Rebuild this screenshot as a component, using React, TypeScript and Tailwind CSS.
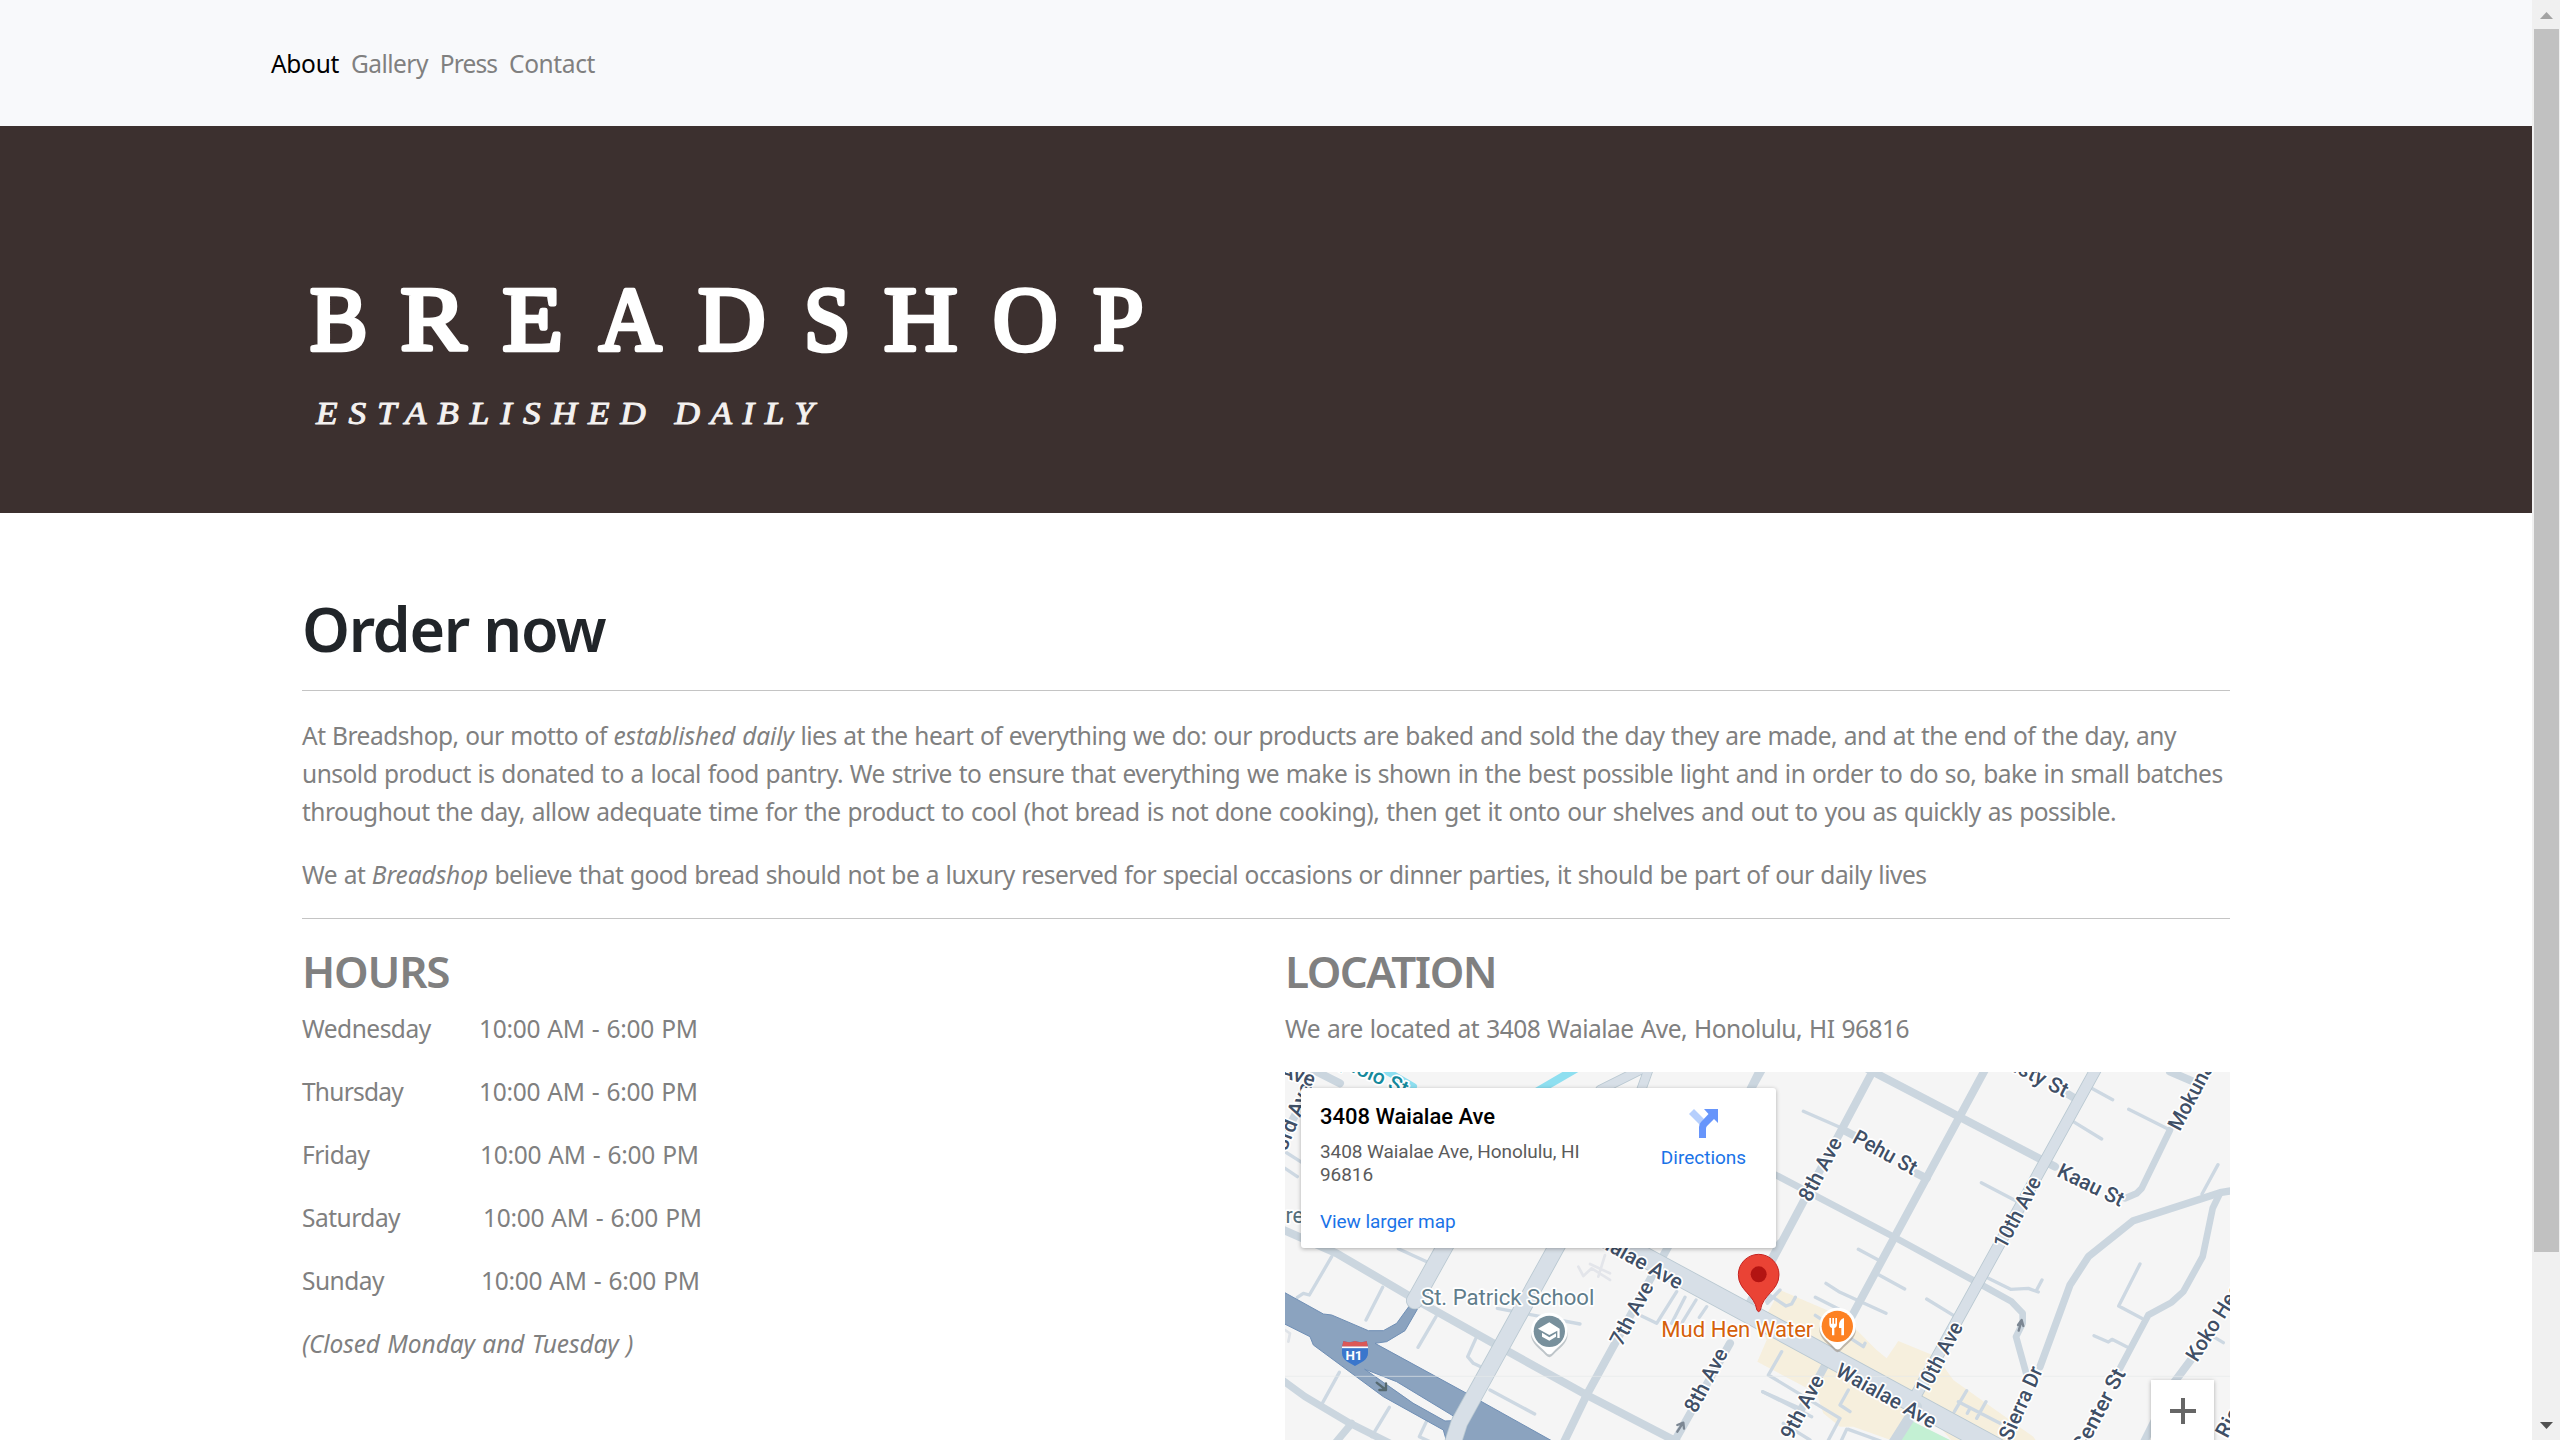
const navLinks = [
  { t: 'About', cls: 'text-black tracking-[-0.3px]' },
  { t: 'Gallery', cls: 'tracking-[-0.55px]' },
  { t: 'Press', cls: 'tracking-[-0.9px]' },
  { t: 'Contact', cls: 'tracking-[-0.4px]' },
];

const hours = [
  { day: 'Wednesday', pad: 'w-[177px]' },
  { day: 'Thursday', pad: 'w-[177px] tracking-[-0.75px]' },
  { day: 'Friday', pad: 'w-[178px]' },
  { day: 'Saturday', pad: 'w-[181px]' },
  { day: 'Sunday', pad: 'w-[179px]' },
];

const wordmark = [
  { c: 'B', x: 310, w: 57 },
  { c: 'R', x: 400.5, w: 65 },
  { c: 'E', x: 502.5, w: 60 },
  { c: 'A', x: 599, w: 62 },
  { c: 'D', x: 698, w: 67 },
  { c: 'S', x: 804, w: 46 },
  { c: 'H', x: 884, w: 73 },
  { c: 'O', x: 993, w: 64 },
  { c: 'P', x: 1093, w: 50 },
];

function Logo() {
  return (
    <svg className="block h-[387px] w-full" viewBox="0 126 2532 387">
      <g fill="#fff" stroke="#fff" strokeWidth="4.6" strokeLinejoin="round" fontFamily="'Liberation Serif', serif" fontSize="91">
        {wordmark.map((l, i) => (
          <text key={i} x={l.x} y="349.5" textLength={l.w} lengthAdjust="spacingAndGlyphs">{l.c}</text>
        ))}
      </g>
      <g fill="#f4f1f0" stroke="#f4f1f0" strokeWidth="1" strokeLinejoin="round" fontFamily="'Liberation Serif', serif" fontStyle="italic" fontSize="31.500">
        <text transform="translate(316 424) scale(1.12 1)" textLength="294">ESTABLISHED</text>
        <text transform="translate(674.5 424) scale(1.12 1)" textLength="124">DAILY</text>
      </g>
    </svg>
  );
}

const labels = [
  { t: '8th Ave', x: 211, y: 429, a: -62, w: 207 },
  { t: 'Pehu St', x: 334, y: 245, a: 29, w: 209 },
  { t: '10th Ave', x: 796, y: 570, a: -62, w: 233 },
  { t: '10th Ave', x: 561, y: 1006, a: -62, w: 233 },
  { t: 'Kaau St', x: 947, y: 347, a: 26, w: 215 },
  { t: 'Waialae Ave', x: 283, y: 945, a: 29, w: 334 },
  { t: 'Sierra Dr', x: 814, y: 1145, a: -66, w: 235 },
  { t: 'Center St', x: 1031, y: 1180, a: -62, w: 272 },
  { t: 'Koko Head Ave', x: 1371, y: 909, a: -58, w: 410 },
  { t: 'Mokuna Pl', x: 1319, y: 216, a: -62, w: 290 },
  { t: '9th Ave', x: 157, y: 1142, a: -62, w: 207 },
  { t: '8th Ave', x: -132, y: 1062, a: -62, w: 207 },
  { t: '7th Ave', x: -355, y: 862, a: -62, w: 207 },
  { t: 'Risa Pl', x: 1462, y: 1138, a: -62, w: 200 },
];

const thin =
  'M190 154L310 206M355 568L415 600M258 670L300 697L438 760M412 642L494 687M226 712L330 764M226 766L370 860L375 850M560 717L650 772M724 368L830 424M745 655L812 688L865 685L895 696M890 690L906 660M1055 85L1118 119M1000 185L1085 237M1166 148L1290 210M1434 314L1386 402M1200 612L1136 738L1205 775M1062 827L1105 846L1116 838L1160 860M1420 830L1450 848M90 706L138 738L155 732L166 712M88 705L80 725M125 875L85 945L300 1075L260 1150M68 995L215 1070M130 1090L210 1140M325 990L300 1035L330 1055M325 1108L440 1150M320 1108L300 1150M680 992L643 1055M655 1025L780 1090M738 1025L710 1075M690 1045L682 1060';
const thinWest =
  'M15 275L70 310M15 325L52 350M155 590L88 705L70 700L52 712M355 566L442 606M308 682L258 780M468 770L414 862M590 830L563 890L580 910L602 920M630 990L764 1062M178 937L128 1028M328 1042L275 1130M445 1072L418 1130L450 1145M652 745L900 792M1085 768L1130 790L1190 695M1215 712L1175 790M1248 720L1205 790M1280 740L1258 772M1448 995L1560 1045M1500 690L1462 730';

function StreetMap() {
  return (
    <svg className="absolute inset-0 h-full w-full" viewBox="0 0 945 368">
      <rect width="945" height="368" fill="#f5f5f5" />
      <g transform="translate(455 -12) scale(.33333)" fill="none" strokeLinecap="round" strokeLinejoin="round">
        <path d="M120 690L295 765L340 800L410 870L440 895L475 843L590 890L640 960L880 1130L900 1160H650L530 1020L480 1150L340 1100L300 1100L250 1060L230 1000L52 905L80 840L60 800Z" fill="#f6efdd" />
        <path d="M505 1078L640 1145H470Z" fill="#c3f0d3" />
      </g>

      <g transform="translate(-5 -12) scale(.33333)" fill="none" strokeLinecap="round" strokeLinejoin="round">
        <path d={thinWest} stroke="#cdd8e2" strokeWidth="10" />
        <path d="M895 620L910 648L935 625L990 660M975 585L955 650M930 612L990 640" stroke="#e3e5ea" strokeWidth="8" />
        <path d="M0 800L30 820L25 845" stroke="#dfe3e8" strokeWidth="8" />
        <g stroke="#cbd6df" strokeWidth="24">
          <path d="M0 505L170 580L400 715L640 850L920 1005L1190 1145" />
          <path d="M0 955L75 1010L210 1090L330 1150M215 1090L165 1150" strokeWidth="22" />
          <path d="M1170 550L920 1005L850 1150" />
          <path d="M1350 850L1180 1150" />
          <path d="M1500 550L1440 660M1445 30L1400 110" />
          <path d="M100 30L180 70M0 250L70 120" />
        </g>
        <path d="M280 10L400 80" stroke="#8edff0" strokeWidth="22" />
        <path d="M890 25L770 95" stroke="#8edff0" strokeWidth="24" />
        <path d="M1080 30L960 90M1105 30L1080 100" stroke="#b9c8d1" strokeWidth="30" />
        <path d="M1080 30L960 90M1105 30L1080 100" stroke="#d7dfe7" strokeWidth="25" />
        <path d="M0 690L130 762L155 765L265 812L310 812L350 790L390 735L412 748L375 812L320 845L285 850L560 1000L820 1145H500L490 1110L310 1010L100 855L90 830L0 785Z" fill="#8ba3bf" stroke="#6f8fb5" strokeWidth="3" />
        <path d="M255 928L350 965L520 1068L518 1082L495 1083L400 1030Z" fill="#f5f5f5" stroke="#6f8fb5" strokeWidth="3" />
        <path d="M500 550L404 722" stroke="#b9c8d1" strokeWidth="52" />
        <path d="M835 550L538 1088L515 1160" stroke="#b9c8d1" strokeWidth="52" />
        <path d="M500 550L404 722" stroke="#d7dfe7" strokeWidth="47" />
        <path d="M835 550L538 1088L515 1160" stroke="#d7dfe7" strokeWidth="47" />
        <path d="M290 968L318 990M318 970V990H298" stroke="#56696f" strokeWidth="7" />
      </g>

      <g transform="translate(455 -12) scale(.33333)" fill="none" strokeLinecap="round" strokeLinejoin="round">
        <path d={thin} stroke="#cdd8e2" strokeWidth="10" />
        <g stroke="#cbd6df" strokeWidth="24">
          <path d="M400 30L20 745M740 20L340 760L150 1110" />
          <path d="M60 30L30 90" />
          <path d="M360 15L910 302L945 320M310 210L345 228M530 340L560 355" />
          <path d="M60 320L460 530L720 672L815 725L848 760V790L828 830L860 945" strokeWidth="20" />
          <path d="M980 100L1000 112M1290 35L1360 65" />
          <path d="M1290 210L1205 385L1190 400L1155 415" strokeWidth="20" />
          <path d="M1490 390L1440 398L1180 482L1045 590L990 675L900 920" strokeWidth="22" />
          <path d="M1440 400L1418 445L1388 590L1330 695L1295 727L1225 765L1140 925" strokeWidth="20" />
          <path d="M1360 890L1300 970L1210 1150" />
        </g>
        <path d="M1072 20L520 1020" stroke="#b9c8d1" strokeWidth="36" />
        <path d="M-400 530L100 800L800 1180" stroke="#b9c8d1" strokeWidth="62" />
        <path d="M1072 20L520 1020" stroke="#d7dfe7" strokeWidth="31" />
        <path d="M-400 530L100 800L800 1180" stroke="#d7dfe7" strokeWidth="57" />
        <path d="M530 1040L460 1150" stroke="#cbd6df" strokeWidth="32" />
        <path d="M836 812L845 782M834 795L845 780L850 798" stroke="#7c8793" strokeWidth="7" />
        <path d="M-188 1115L-172 1090M-188 1095L-170 1088L-168 1106" stroke="#7c8793" strokeWidth="7" />
        <path d="M-1380 949H1470" stroke="#e6e8ea" strokeWidth="2" />
      </g>

      <g transform="translate(455 -12) scale(.33333)" fontFamily="Roboto, sans-serif" fontWeight="500" fontSize="63" fill="#3f4f66" stroke="#fff" strokeWidth="10" strokeLinejoin="round" paintOrder="stroke">
        {labels.map((l, i) => (
          <text key={i} transform={`translate(${l.x} ${l.y}) rotate(${l.a})`} textLength={l.w} lengthAdjust="spacingAndGlyphs">{l.t}</text>
        ))}
        <text transform="translate(972 113) rotate(27)" textAnchor="end">Misty St</text>
        <text transform="translate(-186 690) rotate(29)" textAnchor="end" textLength="342" lengthAdjust="spacingAndGlyphs">Waialae Ave</text>
        <text transform="translate(-1361 275) rotate(-68)">3rd Ave</text>
        <text transform="translate(-1282 80) rotate(17)" textAnchor="end">6th Ave</text>
        <text transform="translate(-1006 108) rotate(24)" textAnchor="end" fill="#15899c">Kapiolo St</text>
        <text x="-1397" y="488" fill="#546e7a" fontWeight="400" fontSize="64">cred</text>
        <text x="-957" y="734" fill="#607d8b" fontWeight="400" fontSize="66" textLength="520" lengthAdjust="spacingAndGlyphs">St. Patrick School</text>
        <text x="-236" y="830" fill="#d5600a" fontWeight="400" fontSize="66" textLength="456" lengthAdjust="spacingAndGlyphs">Mud Hen Water</text>
      </g>

      <g transform="translate(-5 -12) scale(.33333)">
        <path d="M808 762a55 55 0 0 1 55 55c0 32-26 42-44 64q-11 13-22 0c-18-22-44-32-44-64a55 55 0 0 1 55-55Z" fill="#9aa5ab" opacity=".6" transform="translate(0 4)" />
        <path d="M808 758a55 55 0 0 1 55 55c0 32-26 42-44 64q-11 13-22 0c-18-22-44-32-44-64a55 55 0 0 1 55-55Z" fill="#fff" />
        <circle cx="808" cy="814" r="47" fill="#78909c" />
        <path d="M808 787L774 806L808 825L832 812V834H839V806ZM786 818V830L808 842L828 830V820L808 832Z" fill="#fff" />
        <path d="M190 843Q208 850 225 843Q244 850 260 843L264 862V880C264 900 242 909 225 918C208 909 186 900 186 880V862Z" fill="#3a76cc" />
        <path d="M190 843Q208 850 225 843Q244 850 260 843L264 860H186Z" fill="#dc5856" />
        <path d="M186 862H264" stroke="#fff" strokeWidth="5" />
        <text x="222" y="900" textAnchor="middle" fill="#fff" fontFamily="Roboto, sans-serif" fontWeight="700" fontSize="40">H1</text>
        <path d="M1436 583a61 61 0 0 1 61 61c0 48-49 59-56 107q-5 8-10 0c-7-48-56-59-56-107a61 61 0 0 1 61-61Z" fill="#ea4335" stroke="#c5221f" strokeWidth="3" />
        <circle cx="1436" cy="643" r="24" fill="#b31412" />
      </g>
      <g transform="translate(455 -12) scale(.33333)">
        <path d="M293 748a55 55 0 0 1 55 55c0 32-26 42-44 64q-11 13-22 0c-18-22-44-32-44-64a55 55 0 0 1 55-55Z" fill="#9a8f85" opacity=".6" transform="translate(0 3)" />
        <path d="M293 743a55 55 0 0 1 55 55c0 32-26 42-44 64q-11 13-22 0c-18-22-44-32-44-64a55 55 0 0 1 55-55Z" fill="#fff" />
        <circle cx="292" cy="799" r="47" fill="#fd8123" />
        <path d="M268 774V792q0 10 8 12V826H283V804q8-2 8-12V774H286V791H282V774H277V791H273V774ZM312 774q-15 5-15 22V804H304V826H312Z" fill="#fff" />
      </g>
    </svg>
  );
}

function PlaceCard() {
  return (
    <div className="absolute left-4 top-4 flex h-40 w-[475px] justify-between rounded-[3px] bg-white pl-[19px] pr-[30px] shadow-[0_1px_4px_rgba(0,0,0,0.3)]">
      <div className="w-[270px] pt-[15px]">
        <div className="text-[22px] font-medium leading-[27px] text-black">3408 Waialae Ave</div>
        <div className="mt-[10px] text-[19px] leading-[23px] tracking-[-0.07px] text-[#5b5b5b]">
          3408 Waialae Ave, Honolulu, HI
          <br />
          96816
        </div>
        <div className="mt-6 text-[19px] leading-[23px] tracking-[-0.07px] text-[#1a73e8]">View larger map</div>
      </div>
      <div className="flex w-[85px] flex-col items-center pt-[21px]">
        <svg className="h-[29px] w-[29px]" viewBox="0 0 29 29">
          <path d="M0 5L5 0L15 10L11 16Z" fill="#b6cffd" />
          <path d="M15 0H29V14L25 10L18 17Q17 18 17 20V29H10V18Q10 15 12 13L19.500 5Z" fill="#6795fb" />
        </svg>
        <div className="mt-2 text-[19px] leading-[23px] text-[#1a73e8]">Directions</div>
      </div>
    </div>
  );
}

export default function App() {
  return (
    <div className="flex h-[1440px] w-[2560px] overflow-hidden bg-white font-['Noto_Sans','Open_Sans',sans-serif] text-[24.500px] leading-[38px] tracking-[-0.5px] text-[#808080]">
      <main className="h-full w-[2532px] overflow-hidden">
        <nav className="flex h-[126px] items-center gap-3 bg-[#f8f9fb] pl-[271px] pt-0.5">
          {navLinks.map((n) => (
            <a key={n.t} className={n.cls}>{n.t}</a>
          ))}
        </nav>
        <header className="h-[387px] bg-[#3c302f]">
          <Logo />
        </header>
        <div className="mx-[302px] pt-[78px]">
          <h1 className="text-[61px] font-semibold leading-[76px] tracking-[-1.35px] text-[#212529]">Order now</h1>
          <hr className="mt-[23px] border-[#c4c4c4]" />
          <p className="mt-[26px] whitespace-nowrap">
            <span className="block [word-spacing:0.7px]">
              At Breadshop, our motto of <em className="tracking-[-0.1px]">established daily</em> lies at the heart of everything we do: our products are baked and sold the day they are made, and at the end of the day, any
            </span>
            <span className="block [word-spacing:0.87px]">
              unsold product is donated to a local food pantry. We strive to ensure that everything we make is shown in the best possible light and in order to do so, bake in small batches
            </span>
            <span className="block [word-spacing:1.12px]">
              throughout the day, allow adequate time for the product to cool (hot bread is not done cooking), then get it onto our shelves and out to you as quickly as possible.
            </span>
          </p>
          <p className="mt-[25px] whitespace-nowrap [word-spacing:0.7px]">
            We at <em className="tracking-[-0.1px]">Breadshop</em> believe that good bread should not be a luxury reserved for special occasions or dinner parties, it should be part of our daily lives
          </p>
          <hr className="mt-6 border-[#c4c4c4]" />
          <div className="mt-[26px] flex">
            <section className="w-[983px]">
              <h2 className="text-[44px] font-semibold leading-[53px] tracking-[-1.2px]">HOURS</h2>
              <div className="mt-3 flex flex-col gap-[25px]">
                {hours.map((h) => (
                  <p key={h.day} className="flex">
                    <span className={h.pad}>{h.day}</span>
                    <span className="tracking-[-0.27px] [word-spacing:1px]">10:00 AM - 6:00 PM</span>
                  </p>
                ))}
                <p className="italic tracking-[-0.1px] [word-spacing:1.2px]">(Closed Monday and Tuesday )</p>
              </div>
            </section>
            <section className="w-[945px]">
              <h2 className="text-[44px] font-semibold leading-[53px] tracking-[-1.5px]">LOCATION</h2>
              <p className="mt-3 [word-spacing:1.1px]">We are located at 3408 Waialae Ave, Honolulu, HI 96816</p>
              <div className="relative mt-6 h-[368px] overflow-hidden font-[Roboto,sans-serif] tracking-normal">
                <StreetMap />
                <PlaceCard />
                <div className="absolute left-[866px] top-[308px] flex h-[63px] w-[63px] items-center justify-center bg-white shadow-[0_1px_4px_rgba(0,0,0,0.3)]">
                  <svg className="mb-0.5 h-[26px] w-[26px]" viewBox="0 0 26 26">
                    <path d="M11 0H15V11H26V15H15V26H11V15H0V11H11Z" fill="#666" />
                  </svg>
                </div>
              </div>
            </section>
          </div>
        </div>
      </main>
      <aside className="flex h-full w-7 flex-col items-center bg-[#f0f0f0]">
        <svg className="mt-3 h-[7px] w-[13px]" viewBox="0 0 13 7"><path d="M0 7L6.500 0L13 7Z" fill="#a3a3a3" /></svg>
        <div className="mt-[10px] h-[1223px] w-[25px] bg-[#c1c1c1]" />
        <svg className="mt-[170px] h-[7px] w-[13px]" viewBox="0 0 13 7"><path d="M0 0L6.500 7L13 0Z" fill="#505050" /></svg>
      </aside>
    </div>
  );
}
